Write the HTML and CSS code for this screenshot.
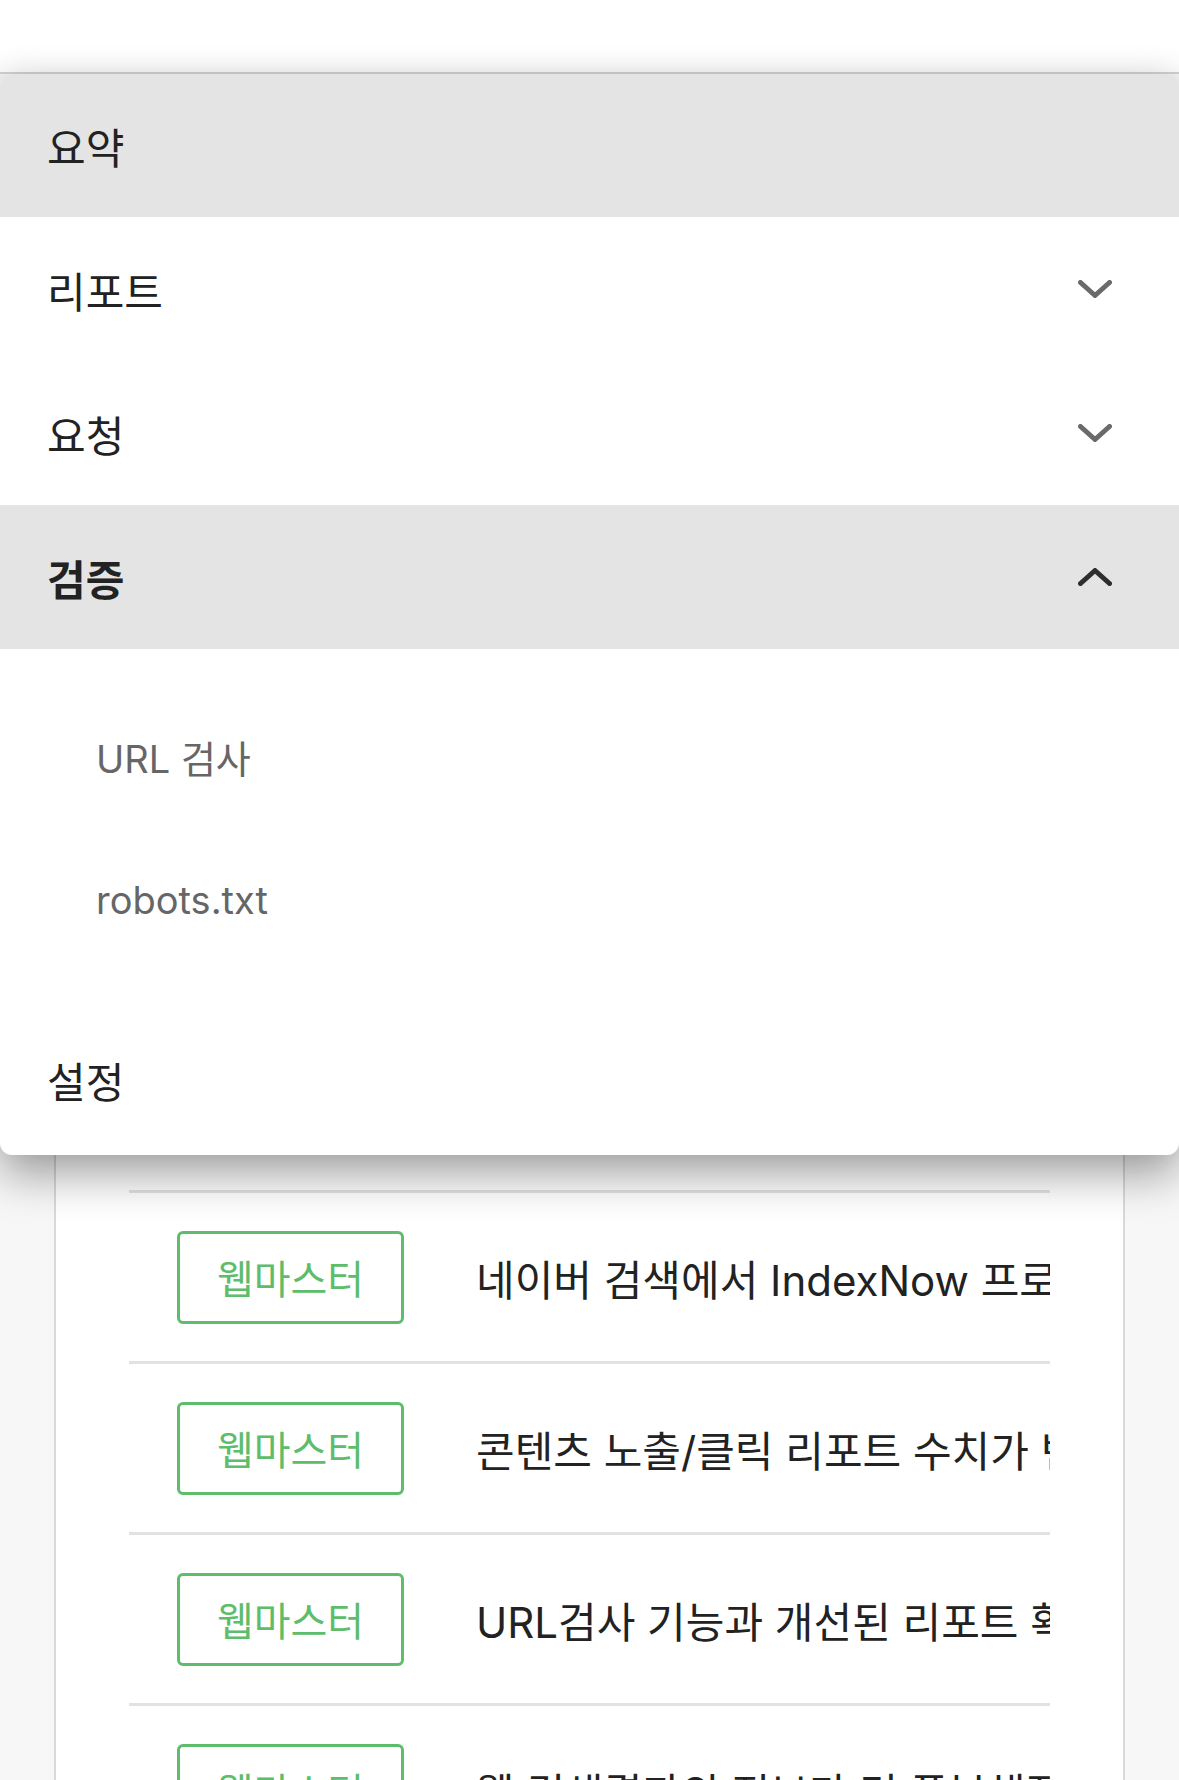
FILE: index.html
```html
<!DOCTYPE html>
<html lang="ko">
<head>
<meta charset="utf-8">
<title>검증 메뉴</title>
<link rel="stylesheet" href="styles.css">
</head>
<body>
<header class="topbar"></header>

<main class="content">
  <section class="card">
    <ul class="notice-list">
      <li class="notice"><span class="badge">웹마스터</span><span class="notice-title">서치어드바이저 개편 안내</span></li>
      <li class="notice"><span class="badge">웹마스터</span><span class="notice-title">소유확인 방식 변경</span></li>
      <li class="notice"><span class="badge">웹마스터</span><span class="notice-title">수집 요청 기능 개선</span></li>
      <li class="notice"><span class="badge">웹마스터</span><span class="notice-title">사이트맵 제출 개선</span></li>
      <li class="notice"><span class="badge">웹마스터</span><span class="notice-title">검색 반영 리포트 안내</span></li>
      <li class="notice"><span class="badge">웹마스터</span><span class="notice-title">모바일 최적화 가이드</span></li>
      <li class="notice"><span class="badge">웹마스터</span><span class="notice-title">네이버 검색에서 IndexNow 프로토콜을 지원합니다</span></li>
      <li class="notice"><span class="badge">웹마스터</span><span class="notice-title">콘텐츠 노출/클릭 리포트 수치가 변경됩니다</span></li>
      <li class="notice"><span class="badge">웹마스터</span><span class="notice-title">URL검사 기능과 개선된 리포트 확인하세요</span></li>
      <li class="notice"><span class="badge">웹마스터</span><span class="notice-title">웹 검색결과의 정보가 더 풍부해집니다</span></li>
    </ul>
  </section>
</main>

<nav class="menu">
  <div class="menu-item is-shaded"><span class="menu-label">요약</span></div>
  <div class="menu-item"><span class="menu-label">리포트</span>
    <svg class="chev chev-down" width="34" height="18" viewBox="0 0 34 18"><polyline points="2.5,2.5 17,15.5 31.5,2.5" fill="none" stroke="currentColor" stroke-width="5" stroke-linecap="round" stroke-linejoin="round"/></svg>
  </div>
  <div class="menu-item"><span class="menu-label">요청</span>
    <svg class="chev chev-down" width="34" height="18" viewBox="0 0 34 18"><polyline points="2.5,2.5 17,15.5 31.5,2.5" fill="none" stroke="currentColor" stroke-width="5" stroke-linecap="round" stroke-linejoin="round"/></svg>
  </div>
  <div class="menu-item is-shaded is-open"><span class="menu-label">검증</span>
    <svg class="chev chev-up" width="34" height="18" viewBox="0 0 34 18"><polyline points="2.5,15.5 17,2.5 31.5,15.5" fill="none" stroke="currentColor" stroke-width="5" stroke-linecap="round" stroke-linejoin="round"/></svg>
  </div>
  <div class="submenu">
    <div class="sub-item">URL 검사</div>
    <div class="sub-item">robots.txt</div>
  </div>
  <div class="menu-item menu-item-last"><span class="menu-label">설정</span></div>
</nav>
</body>
</html>
```

FILE: styles.css
```css
* { box-sizing: border-box; }

html, body {
  margin: 0;
  padding: 0;
}

body {
  width: 1179px;
  height: 1780px;
  overflow: hidden;
  position: relative;
  background: #f7f7f7;
  font-family: "Inter", "Noto Sans CJK KR", sans-serif;
  color: #222;
}

.topbar {
  height: 74px;
  background: #fff;
  border-bottom: 2px solid #d4d4d4;
}

.content {
  padding: 40px 54px 0;
}

.card {
  background: #fff;
  border: 2px solid #d9d9d9;
  padding: 48px 73px 0;
}

.notice-list {
  list-style: none;
  margin: 0;
  padding: 0;
}

.notice {
  display: flex;
  align-items: center;
  gap: 72px;
  height: 171px;
  padding: 0 0 0 48px;
  border-top: 3px solid #e2e2e2;
  white-space: nowrap;
  overflow: hidden;
}

.badge {
  flex: none;
  width: 227px;
  height: 93px;
  border: 3px solid #5dbd6b;
  border-radius: 6px;
  color: #5dbd6b;
  font-size: 40px;
  display: flex;
  align-items: center;
  justify-content: center;
}

.notice-title {
  font-size: 42px;
  color: #222;
  overflow: hidden;
}

.menu {
  position: absolute;
  top: 74px;
  left: 0;
  width: 1179px;
  background: #fff;
  border-radius: 12px;
  overflow: hidden;
  box-shadow: 0 20px 45px rgba(0, 0, 0, 0.36), 0 -4px 30px rgba(0, 0, 0, 0.06);
}

.menu-item {
  height: 144px;
  display: flex;
  align-items: center;
  justify-content: space-between;
  padding: 0 67px 0 47px;
  font-size: 42px;
  color: #222;
}

.menu-item:first-child {
  height: 143px;
}

.menu-item-last {
  height: 148px;
  padding-bottom: 4px;
}

.is-shaded {
  background: #e4e4e4;
}

.is-open .menu-label {
  font-weight: 700;
}

.chev-down { color: #6a6a6a; }
.chev-up { color: #2e2e2e; }

.submenu {
  padding: 35px 0;
}

.sub-item {
  height: 144px;
  display: flex;
  align-items: center;
  padding-left: 96px;
  font-size: 38px;
  color: #666;
}
```
